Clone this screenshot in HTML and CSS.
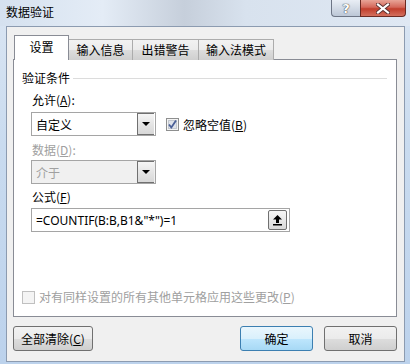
FILE: index.html
```html
<!DOCTYPE html>
<html lang="zh-CN">
<head>
    <meta charset="UTF-8">
    <title>数据验证</title>
    <link rel="stylesheet" href="styles.css">
</head>
<body>
    <div class="window">
        <div class="titlebar">
            <span class="title">数据验证</span>
            <div class="caption-buttons">
                <div class="cap-btn help">?</div>
                <div class="cap-btn close">
                    <svg width="14" height="11" viewBox="0 0 14 11">
                        <path d="M2 1.5 L12 9.5 M12 1.5 L2 9.5" stroke="#5a3030" stroke-width="4" stroke-linecap="square"/>
                        <path d="M2 1.5 L12 9.5 M12 1.5 L2 9.5" stroke="#ffffff" stroke-width="2.2" stroke-linecap="square"/>
                    </svg>
                </div>
            </div>
        </div>

        <div class="client">
            <div class="tabs">
                <div class="tab active">设置</div>
                <div class="tab w1">输入信息</div>
                <div class="tab w2">出错警告</div>
                <div class="tab w3">输入法模式</div>
            </div>

            <div class="panel">
                <div class="group-title">
                    <span>验证条件</span>
                    <span class="group-line"></span>
                </div>

                <div class="fields">
                    <div class="label label-allow">允许(<u>A</u>):</div>
                    <div class="row">
                        <div class="combo">
                            <span class="combo-text">自定义</span>
                            <span class="drop-btn"><span class="arrow"></span></span>
                        </div>
                        <label class="check">
                            <svg width="13" height="13" viewBox="0 0 13 13">
                                <rect x="0.5" y="0.5" width="12" height="12" fill="#f4f4f4" stroke="#8e8f8f"/>
                                <rect x="2.5" y="2.5" width="8" height="8" fill="#dfe3ea" stroke="#c3c8d0"/>
                                <path d="M3 6.5 L5.3 9.5 L10 2.5" fill="none" stroke="#4a5f97" stroke-width="1.8"/>
                            </svg>
                            <span>忽略空值(<u>B</u>)</span>
                        </label>
                    </div>

                    <div class="label label-data disabled">数据(<u>D</u>):</div>
                    <div class="combo combo-disabled">
                        <span class="combo-text">介于</span>
                        <span class="drop-btn"><span class="arrow"></span></span>
                    </div>

                    <div class="label label-formula">公式(<u>F</u>)</div>
                    <div class="formula">
                        <span class="formula-text">=COUNTIF(B:B,B1&amp;"*")=1</span>
                        <span class="ref-btn">
                            <svg width="11" height="12" viewBox="0 0 11 12">
                                <path d="M5.5 1 L10 5.5 L7 5.5 L7 9 L4 9 L4 5.5 L1 5.5 Z" fill="#000"/>
                                <rect x="1" y="10" width="9" height="1.5" fill="#000"/>
                            </svg>
                        </span>
                    </div>
                </div>

                <div class="apply-all disabled">
                    <span class="box-disabled"></span>
                    <span>对有同样设置的所有其他单元格应用这些更改(<u>P</u>)</span>
                </div>
            </div>

            <div class="buttons">
                <button class="btn">全部清除(<u>C</u>)</button>
                <div class="right-buttons">
                    <button class="btn default">确定</button>
                    <button class="btn">取消</button>
                </div>
            </div>
        </div>
    </div>
</body>
</html>
```

FILE: styles.css
```css
body {
    margin: 0;
    font-family: "Noto Sans CJK SC", sans-serif;
    font-size: 12px;
    color: #000;
}
.window {
    width: 410px;
    height: 364px;
    box-sizing: border-box;
    background: linear-gradient(180deg, #dbe6f3 0%, #c9dbef 40%, #bcd2ec 100%);
    overflow: hidden;
}
.titlebar {
    height: 26px;
    display: flex;
    align-items: flex-start;
    background: linear-gradient(90deg, #d5e1ef 0%, #e4ecf6 25%, #c6cfdb 45%, #d8e2ee 60%, #dfe8f3 100%);
}
.title {
    padding: 4px 0 0 6px;
    line-height: 16px;
    color: #000;
}
.caption-buttons {
    margin-left: auto;
    margin-right: 4px;
    display: flex;
}
.cap-btn {
    height: 17px;
    box-sizing: border-box;
    display: flex;
    align-items: center;
    justify-content: center;
    border: 1px solid #6d7585;
    border-top: none;
}
.help {
    width: 29px;
    border-radius: 0 0 0 4px;
    border-right: none;
    background: linear-gradient(180deg, #e9eef5 0%, #d3dbe6 50%, #bcc7d6 100%);
    color: #fff;
    font-family: "DejaVu Sans", sans-serif;
    font-weight: bold;
    font-size: 13px;
    text-shadow: 0 0 1px #333, 0 0 1px #333;
}
.close {
    width: 46px;
    border-radius: 0 0 4px 0;
    border-color: #6b2a22;
    background: linear-gradient(180deg, #e8a497 0%, #d4685a 45%, #c13e2c 55%, #d3705e 100%);
}
.client {
    margin: 0 5px 0 6px;
    height: 336px;
    box-sizing: border-box;
    border: 1px solid #8c9bb0;
    background: #f0f0f0;
    padding: 8px 7px 0 6px;
}
.tabs {
    display: flex;
    align-items: flex-end;
    padding-left: 1px;
    height: 25px;
}
.tab {
    box-sizing: border-box;
    height: 21px;
    line-height: 19px;
    text-align: center;
    border: 1px solid #acacac;
    border-bottom: none;
    margin-left: -1px;
    background: linear-gradient(180deg, #f2f2f2 0%, #ebebeb 50%, #dddddd 51%, #cfcfcf 100%);
}
.tab.active {
    position: relative;
    z-index: 1;
    width: 55px;
    height: 25px;
    line-height: 22px;
    margin-left: 0;
    border-color: #898c95;
    background: #fff;
}
.w1 { width: 65px; }
.w2 { width: 67px; }
.w3 { width: 76px; }
.panel {
    margin-top: -1px;
    height: 258px;
    box-sizing: border-box;
    border: 1px solid #898c95;
    background: #fff;
    display: flex;
    flex-direction: column;
    padding: 10px 0 11px 0;
}
.group-title {
    display: flex;
    align-items: center;
    line-height: 16px;
    padding-left: 8px;
    padding-right: 9px;
}
.group-line {
    flex: 1;
    height: 1px;
    margin-left: 3px;
    background: #dcdcdc;
}
.fields {
    padding-left: 17px;
}
.label {
    line-height: 16px;
    padding-left: 1px;
}
.label-allow { margin-top: 6px; }
.label-data { margin-top: 6px; }
.label-formula { margin-top: 5px; }
.disabled {
    color: #a0a0a0;
}
.row {
    display: flex;
    align-items: center;
    margin-top: 4px;
}
.combo {
    width: 125px;
    height: 24px;
    box-sizing: border-box;
    border: 1px solid #a5a5a5;
    background: #fff;
    display: flex;
    align-items: center;
}
.combo-disabled {
    margin-top: 2px;
    background: #f0f0f0;
    color: #a0a0a0;
}
.combo-text {
    padding-left: 4px;
    flex: 1;
}
.drop-btn {
    width: 17px;
    height: 22px;
    box-sizing: border-box;
    border: 1px solid #707070;
    border-right: none;
    background: linear-gradient(180deg, #f6f6f6 0%, #e5e5e5 50%, #d8d8d8 100%);
    display: flex;
    align-items: center;
    justify-content: center;
    margin-right: 1px;
}
.arrow {
    width: 0;
    height: 0;
    border-left: 4px solid transparent;
    border-right: 4px solid transparent;
    border-top: 4px solid #000;
}
.check {
    display: flex;
    align-items: center;
    margin-left: 10px;
    gap: 4px;
}
.check svg {
    display: block;
}
.formula {
    margin-top: 3px;
    width: 259px;
    height: 24px;
    box-sizing: border-box;
    border: 1px solid #a5a5a5;
    background: #fff;
    display: flex;
    align-items: center;
}
.formula-text {
    flex: 1;
    padding-left: 4px;
    font-family: "Noto Sans", sans-serif;
    font-size: 12px;
}
.ref-btn {
    width: 19px;
    height: 20px;
    box-sizing: border-box;
    margin-right: 2px;
    border: 1px solid #707070;
    border-radius: 2px;
    background: linear-gradient(180deg, #f6f6f6 0%, #e8e8e8 50%, #d9d9d9 100%);
    display: flex;
    align-items: center;
    justify-content: center;
}
.apply-all {
    margin-top: auto;
    display: flex;
    align-items: center;
    gap: 4px;
    padding-left: 8px;
    line-height: 16px;
}
.box-disabled {
    width: 13px;
    height: 13px;
    box-sizing: border-box;
    border: 1px solid #c0c0c0;
    background: #f4f4f4;
}
.buttons {
    display: flex;
    margin-top: 9px;
}
.right-buttons {
    margin-left: auto;
    display: flex;
    gap: 11px;
}
.btn {
    height: 25px;
    box-sizing: border-box;
    border: 1px solid #707070;
    border-radius: 3px;
    background: linear-gradient(180deg, #f2f2f2 0%, #ebebeb 50%, #dddddd 51%, #cfcfcf 100%);
    font-family: "Noto Sans CJK SC", sans-serif;
    font-size: 12px;
    padding: 0;
    width: 73px;
}
.buttons > .btn {
    width: 80px;
}
.btn.default {
    border-color: #3c7fb1;
    background: linear-gradient(180deg, #eaf6fd 0%, #d9f0fc 50%, #bee6fd 51%, #a7d9f5 100%);
}
```
